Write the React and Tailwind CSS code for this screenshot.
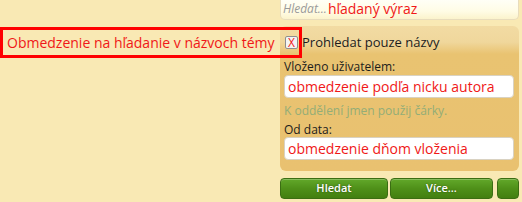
import React from 'react'

function Field({ children }) {
  return (
    <div className="h-[23px] rounded-[4px] border border-[#d9d2c2] bg-white px-[3px] flex items-center text-[14px] text-[#f01818] leading-none">
      {children}
    </div>
  )
}

function GreenButton({ className, children }) {
  return (
    <button
      className={
        'h-[21px] rounded-[4px] border border-[#3b6e13] bg-[linear-gradient(to_bottom,#62a82a_0%,#4f9019_50%,#437f10_100%)] shadow-[inset_0_1px_0_rgba(255,255,255,0.25)] text-white text-[11px] font-semibold flex items-center justify-center [text-shadow:0_0_2px_rgba(0,0,0,0.45)] ' +
        className
      }
    >
      {children}
    </button>
  )
}

export default function App() {
  return (
    <div
      className="relative w-[522px] h-[202px] overflow-hidden bg-[#f9e9b4] flex"
      style={{ fontFamily: '"Open Sans", "Noto Sans", sans-serif' }}
    >
      <div className="flex-1" />

      <div className="w-[239px] mr-[3px] flex flex-col">
        {/* search box */}
        <div className="h-[21px] -mt-[1px] rounded-b-[5px] border border-t-0 border-[#e8dcbc] bg-[linear-gradient(to_bottom,#fffff8_0%,#fffce6_60%,#fbf3cc_100%)] flex items-center pl-[2px] leading-none">
          <span className="italic text-[12px] text-[#9a9a9a]">Hledat...</span>
          <span className="text-[14px] text-[#f01818] ml-[1px]">hľadaný výraz</span>
        </div>

        {/* options panel */}
        <div className="mt-[6px] h-[145px] rounded-[6px] bg-[linear-gradient(to_bottom,#f2dba3_0px,#f0d79c_16px,#e9c371_28px,#e9c170_100%)] px-[4px] pt-[10px] text-[12px] text-[#1c1c1c]">
          <div className="flex items-center h-[13px] leading-none">
            <span className="ml-[1px] w-[13px] h-[13px] border border-[#8e8e8e] bg-[#f4f4f4] rounded-[2px] flex items-center justify-center text-[12px] text-[#f01818] leading-none">
              X
            </span>
            <span className="ml-[4px] text-[13px]">Prohledat pouze názvy</span>
          </div>
          <div className="mt-[12px] h-[12px] leading-none">Vloženo uživatelem:</div>
          <div className="mt-[2px] w-[230px]">
            <Field>obmedzenie podľa nicku autora</Field>
          </div>
          <div className="mt-[7px] h-[12px] leading-none text-[#93ad77]">K oddělení jmen použij čárky.</div>
          <div className="mt-[7px] h-[12px] leading-none">Od data:</div>
          <div className="mt-[1px] w-[230px]">
            <Field>obmedzenie dňom vloženia</Field>
          </div>
        </div>

        {/* buttons */}
        <div className="mt-[7px] flex">
          <GreenButton className="w-[108px]">Hledat</GreenButton>
          <GreenButton className="w-[103px] ml-[2px]">Více...</GreenButton>
          <GreenButton className="w-[22px] ml-[4px]" />
        </div>
      </div>

      {/* annotation box */}
      <div className="absolute left-0 top-[27px] w-[302px] h-[31px] border-[3px] border-[#ff0000] flex items-center pl-[4px] pt-[1px]">
        <span className="text-[14px] text-[#f01818] leading-none">Obmedzenie na hľadanie v názvoch témy</span>
      </div>
    </div>
  )
}
